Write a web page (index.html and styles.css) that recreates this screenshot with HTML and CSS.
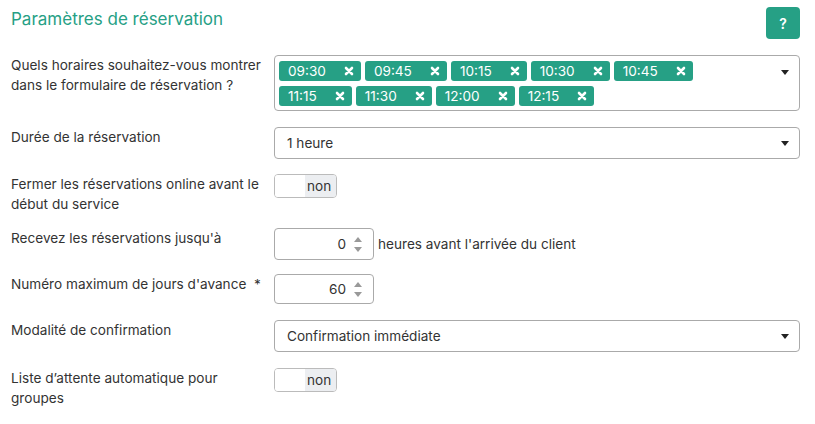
FILE: index.html
```html
<!DOCTYPE html>
<html lang="fr">
<head>
<meta charset="utf-8">
<title>Paramètres de réservation</title>
<link rel="stylesheet" href="styles.css">
</head>
<body>
<div class="panel">
  <div class="header">
    <h2 class="title">Paramètres de réservation</h2>
    <button class="help">?</button>
  </div>

  <div class="row">
    <label class="label">Quels horaires souhaitez-vous montrer dans le formulaire de réservation ?</label>
    <div class="control">
      <div class="multi">
        <div class="tags">
          <span class="tag"><span>09:30</span><svg class="x" viewBox="0 0 10 10"><path d="M2 2L8 8M8 2L2 8"/></svg></span>
          <span class="tag"><span>09:45</span><svg class="x" viewBox="0 0 10 10"><path d="M2 2L8 8M8 2L2 8"/></svg></span>
          <span class="tag"><span>10:15</span><svg class="x" viewBox="0 0 10 10"><path d="M2 2L8 8M8 2L2 8"/></svg></span>
          <span class="tag"><span>10:30</span><svg class="x" viewBox="0 0 10 10"><path d="M2 2L8 8M8 2L2 8"/></svg></span>
          <span class="tag"><span>10:45</span><svg class="x" viewBox="0 0 10 10"><path d="M2 2L8 8M8 2L2 8"/></svg></span>
          <span class="tag"><span>11:15</span><svg class="x" viewBox="0 0 10 10"><path d="M2 2L8 8M8 2L2 8"/></svg></span>
          <span class="tag"><span>11:30</span><svg class="x" viewBox="0 0 10 10"><path d="M2 2L8 8M8 2L2 8"/></svg></span>
          <span class="tag"><span>12:00</span><svg class="x" viewBox="0 0 10 10"><path d="M2 2L8 8M8 2L2 8"/></svg></span>
          <span class="tag"><span>12:15</span><svg class="x" viewBox="0 0 10 10"><path d="M2 2L8 8M8 2L2 8"/></svg></span>
        </div>
        <svg class="caret caret-multi" viewBox="0 0 8 5"><path d="M0 0H8L4 5Z"/></svg>
      </div>
    </div>
  </div>

  <div class="row r15">
    <label class="label">Durée de la réservation</label>
    <div class="control">
      <div class="select"><span>1 heure</span><svg class="caret" viewBox="0 0 8 5"><path d="M0 0H8L4 5Z"/></svg></div>
    </div>
  </div>

  <div class="row r14">
    <label class="label">Fermer les réservations online avant le début du service</label>
    <div class="control">
      <div class="toggle"><span class="toggle-off"></span><span class="toggle-text">non</span></div>
    </div>
  </div>

  <div class="row r14">
    <label class="label">Recevez les réservations jusqu'à</label>
    <div class="control inline">
      <div class="number"><span class="num-val">0</span><span class="spin"><svg viewBox="0 0 8 5"><path d="M0 5H8L4 0Z"/></svg><svg viewBox="0 0 8 5"><path d="M0 0H8L4 5Z"/></svg></span></div>
      <span class="suffix">heures avant l'arrivée du client</span>
    </div>
  </div>

  <div class="row">
    <label class="label">Numéro maximum de jours d'avance&nbsp;&nbsp;<span class="req">*</span></label>
    <div class="control">
      <div class="number short"><span class="num-val">60</span><span class="spin"><svg viewBox="0 0 8 5"><path d="M0 5H8L4 0Z"/></svg><svg viewBox="0 0 8 5"><path d="M0 0H8L4 5Z"/></svg></span></div>
    </div>
  </div>

  <div class="row">
    <label class="label">Modalité de confirmation</label>
    <div class="control">
      <div class="select"><span>Confirmation immédiate</span><svg class="caret" viewBox="0 0 8 5"><path d="M0 0H8L4 5Z"/></svg></div>
    </div>
  </div>

  <div class="row">
    <label class="label">Liste d’attente automatique pour groupes</label>
    <div class="control">
      <div class="toggle"><span class="toggle-off"></span><span class="toggle-text">non</span></div>
    </div>
  </div>
</div>
</body>
</html>
```

FILE: styles.css
```css
* { box-sizing: border-box; }
html, body { margin: 0; padding: 0; background: #fff; }
body {
  font-family: Inter, "Noto Sans", sans-serif;
  font-size: 13.6px;
  color: #333;
}
.panel { padding: 7px 15px 0 11px; }
.header {
  display: flex;
  justify-content: space-between;
  align-items: flex-start;
  margin-bottom: 16px;
}
.title {
  margin: 0;
  font-size: 17px;
  font-weight: 400;
  color: #26a085;
  line-height: 24px;
}
.help {
  width: 34px;
  height: 32px;
  border: 0;
  border-radius: 4px;
  background: #26a085;
  color: #fff;
  font-family: Inter, sans-serif;
  font-size: 14px;
  font-weight: 600;
  padding: 0;
}
.row {
  display: flex;
  align-items: flex-start;
  margin-bottom: 16px;
}
.row.r15 { margin-bottom: 15px; }
.row.r14 { margin-bottom: 14px; }
.label {
  width: 263px;
  flex: none;
  line-height: 20px;
  padding-top: 0;
  padding-right: 10px;
}
.req { font-weight: 400; }
.control { flex: 1; }
.control.inline { display: flex; align-items: center; }
.multi {
  position: relative;
  border: 1px solid #aaa;
  border-radius: 4px;
  height: 56px;
  padding: 5px 50px 4px 4px;
}
.tags { display: flex; flex-wrap: wrap; gap: 5px 4px; }
.tag {
  display: inline-flex;
  align-items: center;
  height: 20px;
  background: #26a085;
  color: #fff;
  border-radius: 3px;
  padding: 0 7px 0 9px;
  font-size: 13.6px;
}
.x {
  width: 10px;
  height: 10px;
  margin-left: 18px;
  stroke: #fff;
  stroke-width: 2.6;
  stroke-linecap: round;
  fill: none;
}
.caret { width: 8px; height: 5px; fill: #222; }
.caret-multi { position: absolute; right: 10px; top: 14px; }
.select {
  display: flex;
  align-items: center;
  justify-content: space-between;
  height: 32px;
  border: 1px solid #aaa;
  border-radius: 4px;
  padding: 0 10px 0 12px;
}
.toggle {
  display: flex;
  width: 63px;
  height: 24px;
  border: 1px solid #bbb;
  border-radius: 4px;
  overflow: hidden;
}
.toggle-off { width: 30px; background: #fff; }
.toggle-text {
  flex: 1;
  background: #eceef1;
  line-height: 22px;
  padding-left: 2px;
}
.number {
  display: flex;
  align-items: center;
  justify-content: flex-end;
  width: 100px;
  height: 32px;
  border: 1px solid #aaa;
  border-radius: 4px;
  padding-right: 11px;
}
.number.short { height: 30px; }
.num-val { margin-right: 8px; }
.spin { display: flex; flex-direction: column; gap: 5px; }
.spin svg { width: 8px; height: 5px; fill: #999; display: block; }
.suffix { margin-left: 4px; }
```
